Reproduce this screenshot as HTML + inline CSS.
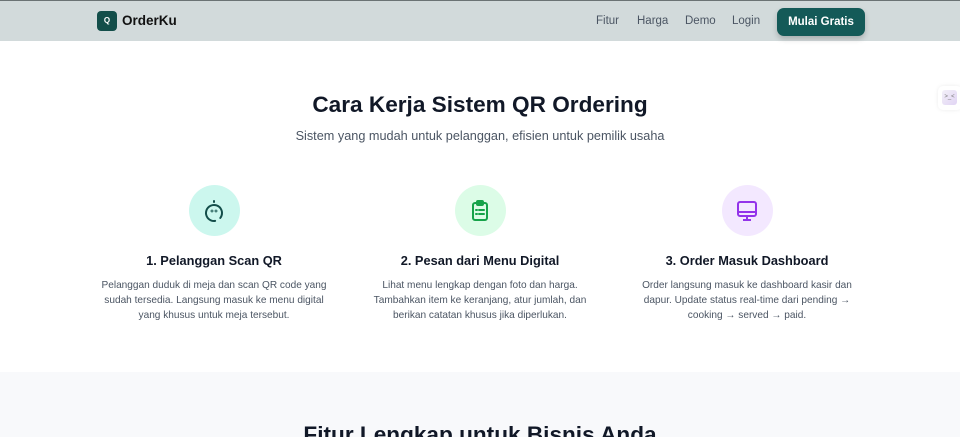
<!DOCTYPE html>
<html><head><meta charset="utf-8"><style>
*{margin:0;padding:0;box-sizing:border-box}
html,body{width:960px;height:437px;overflow:hidden}
body{background:#fff;font-family:"Liberation Sans",sans-serif;color:#111827;position:relative}
.nav{position:absolute;top:0;left:0;width:960px;height:41px;background:#d2dadb;border-top:1px solid #6b7374}
.logo{position:absolute;left:97px;top:10px;width:20px;height:20px;background:#134e4a;border-radius:4px;color:#fff;font-size:8px;font-weight:bold;text-align:center;line-height:20px}
.brand{position:absolute;left:122px;top:12px;font-size:13.5px;font-weight:bold;color:#111}
.links{position:absolute;top:14px;font-size:11.5px;color:#4b5563}
.btn{position:absolute;left:777px;top:7px;width:88px;height:28px;background:#145a58;border-radius:7px;color:#fff;font-size:11.5px;font-weight:bold;text-align:center;line-height:28px;box-shadow:0 3px 6px rgba(0,0,0,.2)}
h1{position:absolute;top:92px;width:960px;text-align:center;font-size:22.6px;font-weight:bold}
.sub{position:absolute;top:129px;width:960px;text-align:center;font-size:12.7px;color:#4b5563}
.col{position:absolute;top:185px;width:250px;text-align:center}
.circ{width:51px;height:51px;border-radius:50%;margin:0 auto;display:flex;align-items:center;justify-content:center}
.col h3{font-size:12.8px;font-weight:bold;margin-top:17px}
.col p{font-size:10.1px;line-height:15px;color:#4b5563;margin-top:10px;padding:0 8px}
.sec2{position:absolute;top:372px;left:0;width:960px;height:65px;background:#f8f9fb;overflow:hidden}
.sec2 h2{position:absolute;top:50px;width:960px;text-align:center;font-size:22.6px;font-weight:bold}
.side{position:absolute;left:938px;top:86px;width:24px;height:24px;border-radius:5px;background:#fff;box-shadow:0 0 4px rgba(0,0,0,.08)}
.side div{position:absolute;left:4px;top:4px;width:15px;height:15px;border-radius:3px;background:linear-gradient(135deg,#f3f0f8,#e1d4f4);font-size:6px;color:#777;text-align:center;line-height:15px}
</style></head><body>
<div class="nav">
<div class="logo">Q</div><div class="brand">OrderKu</div>
<span class="links" style="left:596px">Fitur</span>
<span class="links" style="left:637px">Harga</span>
<span class="links" style="left:685px">Demo</span>
<span class="links" style="left:732px">Login</span>
<div class="btn">Mulai Gratis</div>
</div>
<div class="side"><div>&gt;_&lt;</div></div>
<h1>Cara Kerja Sistem QR Ordering</h1>
<div class="sub">Sistem yang mudah untuk pelanggan, efisien untuk pemilik usaha</div>
<div class="col" style="left:89px"><div class="circ" style="background:#ccf7ee">
<svg width="22" height="24" viewBox="0 0 22 24" fill="none" stroke="#134e4a" stroke-width="2" stroke-linecap="round"><circle cx="11" cy="14" r="8" stroke-dasharray="40 6" transform="rotate(110 11 14)"/><line x1="11" y1="2" x2="11" y2="3"/><circle cx="9" cy="12" r=".4"/><circle cx="13" cy="12" r=".4"/></svg></div>
<h3>1. Pelanggan Scan QR</h3><p>Pelanggan duduk di meja dan scan QR code yang sudah tersedia. Langsung masuk ke menu digital yang khusus untuk meja tersebut.</p></div>
<div class="col" style="left:355px"><div class="circ" style="background:#dcfce7">
<svg width="20" height="22" viewBox="0 0 20 22" fill="none" stroke="#16a34a" stroke-width="2" stroke-linecap="round"><rect x="3" y="3" width="14" height="17" rx="2"/><rect x="7" y="1" width="6" height="4" rx="1"/><line x1="6" y1="10" x2="7" y2="10"/><line x1="9" y1="10" x2="14" y2="10"/><line x1="6" y1="14" x2="7" y2="14"/><line x1="9" y1="14" x2="14" y2="14"/></svg></div>
<h3>2. Pesan dari Menu Digital</h3><p>Lihat menu lengkap dengan foto dan harga. Tambahkan item ke keranjang, atur jumlah, dan berikan catatan khusus jika diperlukan.</p></div>
<div class="col" style="left:622px"><div class="circ" style="background:#f3e8ff">
<svg width="22" height="22" viewBox="0 0 22 22" fill="none" stroke="#9333ea" stroke-width="2"><rect x="2" y="2" width="18" height="14" rx="2"/><line x1="2" y1="12" x2="20" y2="12"/><line x1="11" y1="16" x2="11" y2="19"/><line x1="7" y1="20" x2="15" y2="20"/></svg></div>
<h3>3. Order Masuk Dashboard</h3><p>Order langsung masuk ke dashboard kasir dan dapur. Update status real-time dari pending → cooking → served → paid.</p></div>
<div class="sec2"><h2>Fitur Lengkap untuk Bisnis Anda</h2></div>
</body></html>
